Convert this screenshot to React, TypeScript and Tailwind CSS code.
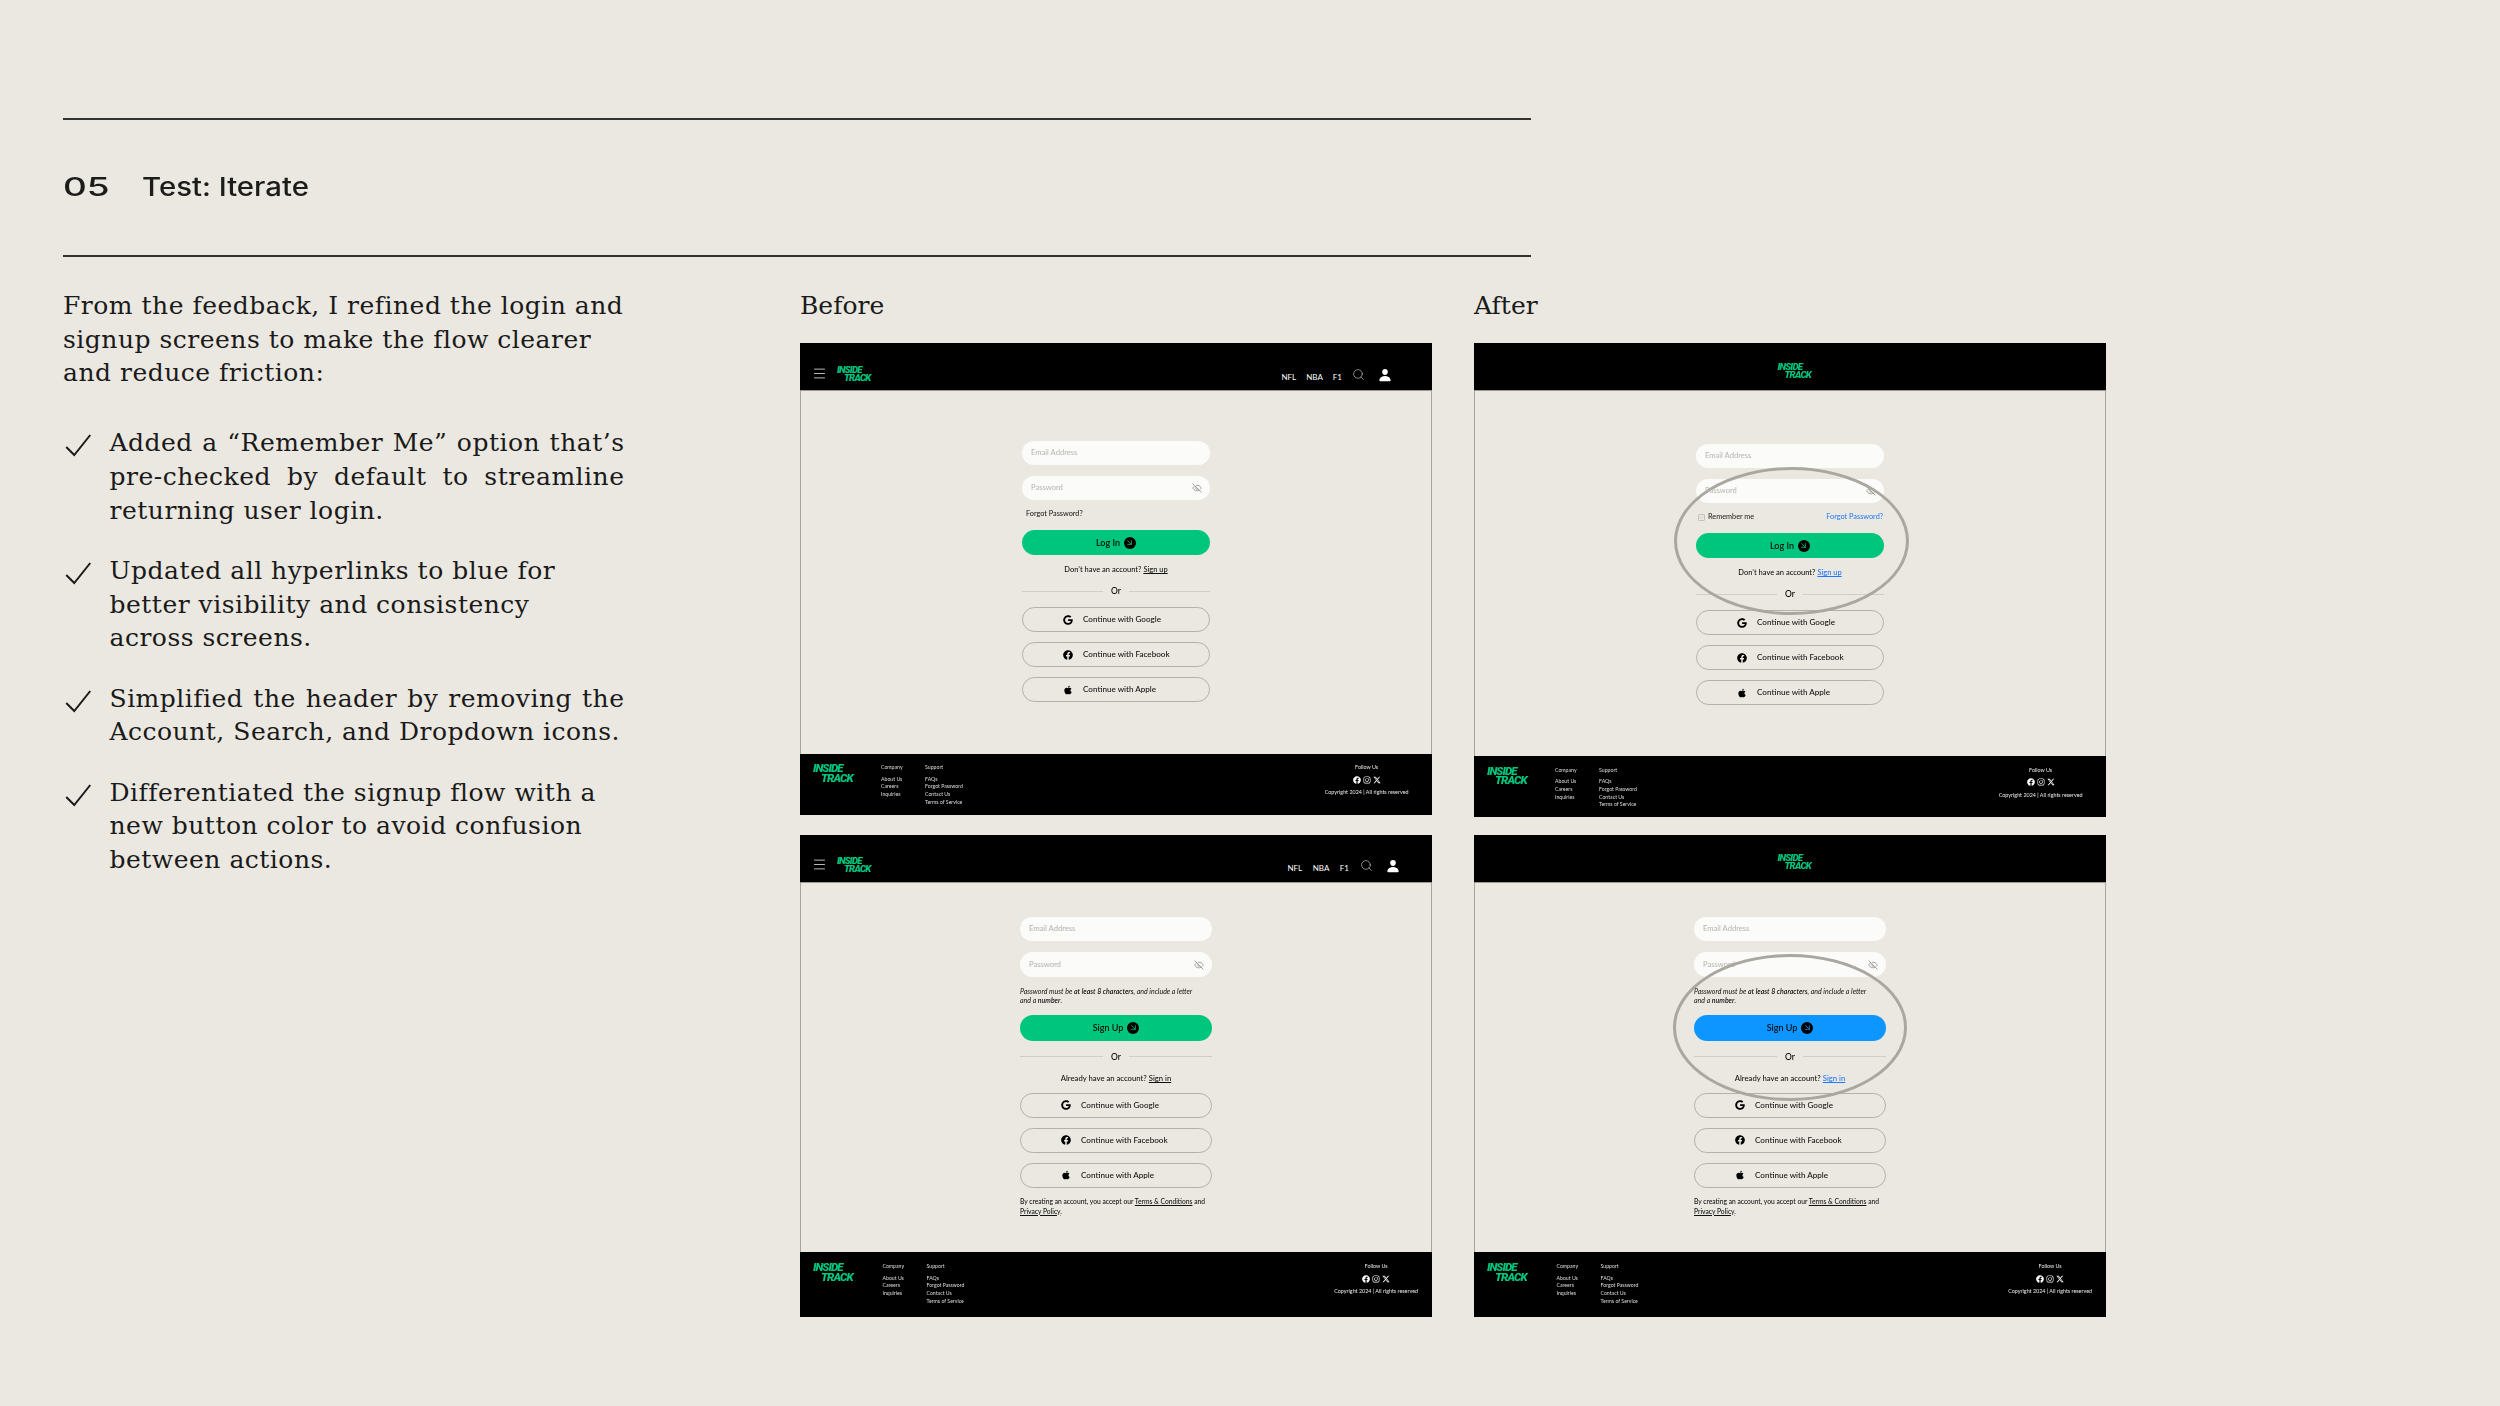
import React from 'react';
import { Menu, Search, ArrowDownRight, Check, EyeOff } from 'lucide-react';
import { FaGoogle, FaFacebook, FaApple, FaInstagram } from 'react-icons/fa';
import { FaXTwitter } from 'react-icons/fa6';
import { IoPerson } from 'react-icons/io5';

const SERIF = "font-['DejaVu_Serif','Liberation_Serif',serif]";
const UI = "font-['Lato','Liberation_Sans',sans-serif]";

// Each text line is listed on its own since some lines are justified in the picture
const bullets = [
  { lines: ['Added a “Remember Me” option that’s', 'pre-checked by default to streamline', 'returning user login.'], justified: 2 },
  { lines: ['Updated all hyperlinks to blue for', 'better visibility and consistency', 'across screens.'], justified: 0 },
  { lines: ['Simplified the header by removing the', 'Account, Search, and Dropdown icons.'], justified: 1 },
  { lines: ['Differentiated the signup flow with a', 'new button color to avoid confusion', 'between actions.'], justified: 0 },
];

const Logo = ({ big = false }: { big?: boolean }) => (
  <div className={`font-['Roboto',sans-serif] font-black italic text-[#00c67d] tracking-[-0.08em] ${big ? 'w-[38px] text-[11.5px] leading-[9.5px]' : 'w-[32px] text-[9.6px] leading-[8.2px]'}`}>
    <div>INSIDE</div>
    <div className={big ? 'pl-[8px]' : 'pl-[7px]'}>TRACK</div>
  </div>
);

const Header = ({ simple, signup }: { simple: boolean; signup: boolean }) => {
  if (simple) {
    return (
      <div className={`h-[48px] shrink-0 bg-black border-b border-[#9a9890] flex justify-center items-end pl-[7px] ${signup ? 'pb-[12px]' : 'pb-[11px]'}`}>
        <Logo />
      </div>
    );
  }
  return (
    <div className={`h-[48px] shrink-0 bg-black border-b border-[#9a9890] flex items-end pl-[12px] ${signup ? 'pb-[9px] pr-[32px]' : 'pb-[8px] pr-[40px]'}`}>
      <Menu size={15} strokeWidth={1.3} className="text-[#e4e4e4] mb-[1px]" />
      <div className="ml-[10px]"><Logo /></div>
      <div className={`ml-auto flex items-center text-white ${UI} text-[8px] leading-[10px] ${signup ? 'gap-[10.5px]' : 'gap-[10px]'}`}>
        <span className="mt-[2px]">NFL</span>
        <span className="mt-[2px]">NBA</span>
        <span className="mt-[2px]">F1</span>
        <Search size={13} strokeWidth={1.1} className="text-[#dddddd] -mt-[4px]" />
        <IoPerson size={14} className="ml-[3px] -mt-[2px]" />
      </div>
    </div>
  );
};

const Field = ({ label, eye = false, tall = false }: { label: string; eye?: boolean; tall?: boolean }) => (
  <div className={`w-full rounded-full bg-[#fbfbf9] flex items-center justify-between pl-[9px] pr-[8px] text-[#b5b4ae] text-[7.6px] ${tall ? 'h-[25px]' : 'h-[24px]'}`}>
    <span>{label}</span>
    {eye && <EyeOff size={10} strokeWidth={2.2} className="text-[#9b9b96]" />}
  </div>
);

const Primary = ({ label, blue = false, tall = false }: { label: string; blue?: boolean; tall?: boolean }) => (
  <div className={`w-full rounded-full flex items-center justify-center gap-[4px] text-black font-medium text-[9px] ${blue ? 'bg-[#0d96ff]' : 'bg-[#00c67d]'} ${tall ? 'h-[26px]' : 'h-[25px]'}`}>
    <span>{label}</span>
    <span className="w-[12px] h-[12px] rounded-full bg-black flex items-center justify-center">
      <ArrowDownRight size={9} strokeWidth={2} className={blue ? 'text-[#0d96ff]' : 'text-[#00c67d]'} />
    </span>
  </div>
);

const Or = () => (
  <div className="w-full h-[10px] flex items-center gap-[8px] text-[8.5px] font-medium text-black">
    <span className="flex-1 h-px bg-[#cfcdc5]" />
    <span>Or</span>
    <span className="flex-1 h-px bg-[#cfcdc5]" />
  </div>
);

const Social = () => (
  <div className="w-full flex flex-col gap-[10px]">
    {[
      { Icon: FaGoogle, label: 'Continue with Google' },
      { Icon: FaFacebook, label: 'Continue with Facebook' },
      { Icon: FaApple, label: 'Continue with Apple' },
    ].map(({ Icon, label }) => (
      <div key={label} className="h-[25px] rounded-full border border-[#b3b1a9] flex items-center pl-[40px] text-[8.1px] font-medium text-[#111111]">
        <span className="w-[20px] flex justify-start"><Icon size={10} className="text-black" /></span>
        <span>{label}</span>
      </div>
    ))}
  </div>
);

const LoginForm = ({ after }: { after: boolean }) => (
  <div className={`w-[188px] mx-auto flex flex-col items-center ${UI} ${after ? 'pt-[53px]' : 'pt-[50px]'}`}>
    <Field label="Email Address" />
    <div className="w-full mt-[10.5px]"><Field label="Password" eye /></div>
    {after ? (
      <div className="w-full h-[10px] mt-[10px] flex items-center text-[7.3px]">
        <span className="w-[6.5px] h-[6.5px] border border-[#c4c3bc] rounded-[1px] mr-[3.5px] ml-[2px] flex items-center justify-center">
          <Check size={5} className="text-[#a5a49d]" />
        </span>
        <span className="text-[#222222]">Remember me</span>
        <span className="ml-auto mr-[1px] text-[#1f78ff]">Forgot Password?</span>
      </div>
    ) : (
      <div className="w-full h-[10px] mt-[10px] pl-[4px] flex items-center text-[7.3px] text-[#111111]">Forgot Password?</div>
    )}
    <div className="w-full mt-[10.5px]"><Primary label="Log In" /></div>
    <div className="h-[10px] mt-[10px] flex items-center gap-[2px] text-[7.5px] font-medium text-[#111111]">
      <span>Don’t have an account?</span>
      <span className={`underline ${after ? 'text-[#1f78ff]' : ''}`}>Sign up</span>
    </div>
    <div className="w-full mt-[11px]"><Or /></div>
    <div className="w-full mt-[11px]"><Social /></div>
  </div>
);

const SignupForm = ({ after }: { after: boolean }) => (
  <div className={`w-[192px] mx-auto flex flex-col items-center pt-[34px] ${UI}`}>
    <Field label="Email Address" />
    <div className="w-full mt-[11px]"><Field label="Password" eye tall /></div>
    <p className="w-full mt-[9.5px] text-[7px] leading-[9.2px] italic text-[#111111]">
      Password must be <b className="font-semibold">at least 8 characters</b>, and include a letter<br />
      and a <b className="font-semibold">number</b>.
    </p>
    <div className="w-full mt-[10px]"><Primary label="Sign Up" blue={after} tall /></div>
    <div className="w-full mt-[11px]"><Or /></div>
    <div className="h-[10px] mt-[12px] flex items-center gap-[2px] text-[7.7px] font-medium text-[#111111]">
      <span>Already have an account?</span>
      <span className={`underline ${after ? 'text-[#1f78ff]' : ''}`}>Sign in</span>
    </div>
    <div className="w-full mt-[9px]"><Social /></div>
    <p className="w-full mt-[9.5px] text-[6.7px] leading-[9.2px] font-medium text-[#111111]">
      By creating an account, you accept our <span className="underline">Terms &amp; Conditions</span> and<br />
      <span className="underline">Privacy Policy</span>.
    </p>
  </div>
);

const Footer = ({ signup }: { signup: boolean }) => (
  <div className={`flex-1 bg-black text-white flex pl-[13px] ${UI} ${signup ? 'pt-[11px] pr-[14px]' : 'pt-[10.5px] pr-[23.5px]'}`}>
    <div className={signup ? 'w-[69.5px]' : 'w-[68px]'}><Logo big /></div>
    <div className="w-[44px] text-[5.2px] leading-[7.7px] text-[#dededb]">
      <div className="mb-[4px]">Company</div>
      <div>About Us</div>
      <div>Careers</div>
      <div>Inquiries</div>
    </div>
    <div className="text-[5.2px] leading-[7.7px] text-[#dededb]">
      <div className="mb-[4px]">Support</div>
      <div>FAQs</div>
      <div>Forgot Password</div>
      <div>Contact Us</div>
      <div>Terms of Service</div>
    </div>
    <div className="ml-auto flex flex-col items-center text-[5.4px] leading-[7.7px] text-[#e8e8e6]">
      <div>Follow Us</div>
      <div className="h-[10px] mt-[3px] flex items-center gap-[2px] text-white">
        <FaFacebook size={8} />
        <FaInstagram size={8} />
        <FaXTwitter size={8} />
      </div>
      <div className="mt-[4.5px]">Copyright 2024 | All rights reserved</div>
    </div>
  </div>
);

const Frame = ({ after, signup, height, mainHeight, ring }: { after: boolean; signup: boolean; height: string; mainHeight: string; ring?: string }) => (
  <div className={`relative w-[632px] flex flex-col blur-[0.3px] ${height}`}>
    <Header simple={after} signup={signup} />
    <div className={`shrink-0 border-x border-[#a7a59d] ${mainHeight}`}>
      {signup ? <SignupForm after={after} /> : <LoginForm after={after} />}
    </div>
    <Footer signup={signup} />
    {ring && <div className={`absolute rounded-[50%] border-[3px] border-[#a9a79f] ${ring}`} />}
  </div>
);

export default function App() {
  return (
    <div className="w-full min-h-screen bg-[#eae8e0] text-[#1a1a1a] pl-[63px] pt-[118px]">
      <div className="w-[1468px] h-[139px] pb-[3px] border-y-2 border-[#33332f] flex items-center font-['Inter',sans-serif] font-medium text-[26px] text-[#1c1c1a]">
        <span className="w-[78.5px] origin-left scale-x-[1.42]">05</span>
        <span className="origin-left scale-x-[1.13]">Test: Iterate</span>
      </div>

      <div className="flex pt-[32px]">
        <div className={`w-[737px] text-[25px] leading-[33.7px] tracking-[0.5px] ${SERIF}`}>
          <p>
            From the feedback, I refined the login and<br />
            signup screens to make the flow clearer<br />
            and reduce friction:
          </p>
          <ul className="mt-[36px] flex flex-col gap-[26.6px]">
            {bullets.map(b => (
              <li key={b.lines[0]} className="flex">
                <svg className="w-[46.5px] h-[24px] shrink-0 mt-[7px]" viewBox="0 0 46 24" fill="none" stroke="#1a1a1a" strokeWidth={2}>
                  <path d="M3 14l8 8L27 2" />
                </svg>
                <div className="w-[515px]">
                  {b.lines.map((line, i) => (
                    <span key={line} className={`block ${i < b.justified ? '[text-align-last:justify]' : ''}`}>{line}</span>
                  ))}
                </div>
              </li>
            ))}
          </ul>
        </div>

        <div className="flex gap-[42px]">
          <div className="flex flex-col">
            <div className={`text-[25px] leading-[33.7px] mb-[20.3px] ${SERIF}`}>Before</div>
            <Frame after={false} signup={false} height="h-[472px]" mainHeight="h-[362.5px]" />
            <div className="mt-[20px]"><Frame after={false} signup height="h-[482px]" mainHeight="h-[369px]" /></div>
          </div>
          <div className="flex flex-col">
            <div className={`text-[25px] leading-[33.7px] mb-[20.3px] ${SERIF}`}>After</div>
            <Frame after={true} signup={false} height="h-[474px]" mainHeight="h-[365px]" ring="left-[200px] top-[123.5px] w-[235px] h-[148px]" />
            <div className="mt-[18px]"><Frame after={true} signup height="h-[482px]" mainHeight="h-[369px]" ring="left-[198.5px] top-[119px] w-[234.5px] h-[147px]" /></div>
          </div>
        </div>
      </div>
    </div>
  );
}
